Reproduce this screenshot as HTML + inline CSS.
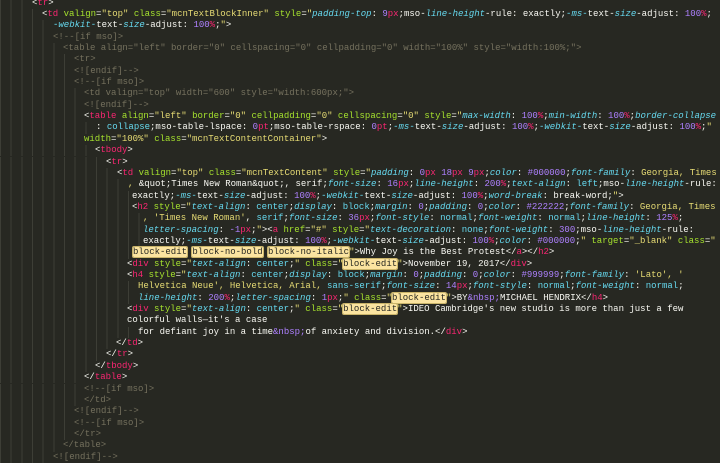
<!DOCTYPE html>
<html><head><meta charset="utf-8"><style>
html,body{margin:0;padding:0;}
body{width:720px;height:460px;overflow:hidden;background:#272822;position:relative;font-family:"Liberation Mono",monospace;font-size:9px;color:#f8f8f2;}
.l{position:absolute;left:0;height:11.35px;line-height:11.35px;white-space:pre;}
.g{position:absolute;left:0;height:11.35px;background:repeating-linear-gradient(90deg,#3d3e36 0,#3d3e36 1px,transparent 1px,transparent 10.67px);}
.t{color:#f92672}.a{color:#a6e22e}.s{color:#e6db74}.p{color:#66d9ef;font-style:italic}.v{color:#66d9ef}.n{color:#ae81ff}.u{color:#f92672}.c{color:#75715e}
.h{background:#fbe4a0;color:#272822;box-shadow:0 0 0 1px #c9b46a;border-radius:1px}
</style></head><body>
<div id="root"></div>
<script>
(function(){
var L=[
[32,'&lt;<span class="t">tr</span>&gt;'],
[42,'&lt;<span class="t">td</span> <span class="a">valign</span>=<span class="s">"top"</span> <span class="a">class</span>=<span class="s">"mcnTextBlockInner"</span> <span class="a">style</span>=<span class="s">"</span><span class="p">padding-top</span>: <span class="n">9</span><span class="u">px</span>;mso-<span class="p">line-height</span>-rule: exactly;<span class="p">-ms-</span>text-<span class="p">size</span>-adjust: <span class="n">100</span><span class="u">%</span>;'],
[53,'<span class="p">-webkit-</span>text-<span class="p">size</span>-adjust: <span class="n">100</span><span class="u">%</span>;<span class="s">"</span>&gt;'],
[53,'<span class="c">&lt;!--[if mso]&gt;</span>'],
[63,'<span class="c">&lt;table align="left" border="0" cellspacing="0" cellpadding="0" width="100%" style="width:100%;"&gt;</span>'],
[74,'<span class="c">&lt;tr&gt;</span>'],
[74,'<span class="c">&lt;![endif]--&gt;</span>'],
[74,'<span class="c">&lt;!--[if mso]&gt;</span>'],
[84,'<span class="c">&lt;td valign="top" width="600" style="width:600px;"&gt;</span>'],
[84,'<span class="c">&lt;![endif]--&gt;</span>'],
[84,'&lt;<span class="t">table</span> <span class="a">align</span>=<span class="s">"left"</span> <span class="a">border</span>=<span class="s">"0"</span> <span class="a">cellpadding</span>=<span class="s">"0"</span> <span class="a">cellspacing</span>=<span class="s">"0"</span> <span class="a">style</span>=<span class="s">"</span><span class="p">max-width</span>: <span class="n">100</span><span class="u">%</span>;<span class="p">min-width</span>: <span class="n">100</span><span class="u">%</span>;<span class="p">border-collapse</span>'],
[96,': <span class="v">collapse</span>;mso-table-lspace: <span class="n">0</span><span class="u">pt</span>;mso-table-rspace: <span class="n">0</span><span class="u">pt</span>;<span class="p">-ms-</span>text-<span class="p">size</span>-adjust: <span class="n">100</span><span class="u">%</span>;<span class="p">-webkit-</span>text-<span class="p">size</span>-adjust: <span class="n">100</span><span class="u">%</span>;<span class="s">"</span>'],
[84,'<span class="a">width</span>=<span class="s">"100%"</span> <span class="a">class</span>=<span class="s">"mcnTextContentContainer"</span>&gt;'],
[95,'&lt;<span class="t">tbody</span>&gt;'],
[106,'&lt;<span class="t">tr</span>&gt;'],
[117,'&lt;<span class="t">td</span> <span class="a">valign</span>=<span class="s">"top"</span> <span class="a">class</span>=<span class="s">"mcnTextContent"</span> <span class="a">style</span>=<span class="s">"</span><span class="p">padding</span>: <span class="n">0</span><span class="u">px</span> <span class="n">18</span><span class="u">px</span> <span class="n">9</span><span class="u">px</span>;<span class="p">color</span>: <span class="n">#000000</span>;<span class="p">font-family</span>: <span class="s">Georgia, Times</span>'],
[128,'<span class="s">, </span>&amp;quot;Times New Roman&amp;quot;, serif;<span class="p">font-size</span>: <span class="n">16</span><span class="u">px</span>;<span class="p">line-height</span>: <span class="n">200</span><span class="u">%</span>;<span class="p">text-align</span>: <span class="v">left</span>;mso-<span class="p">line-height</span>-rule:'],
[132,'exactly;<span class="p">-ms-</span>text-<span class="p">size</span>-adjust: <span class="n">100</span><span class="u">%</span>;<span class="p">-webkit-</span>text-<span class="p">size</span>-adjust: <span class="n">100</span><span class="u">%</span>;<span class="p">word-break</span>: break-word;<span class="s">"</span>&gt;'],
[132,'&lt;<span class="t">h2</span> <span class="a">style</span>=<span class="s">"</span><span class="p">text-align</span>: <span class="v">center</span>;<span class="p">display</span>: <span class="v">block</span>;<span class="p">margin</span>: <span class="n">0</span>;<span class="p">padding</span>: <span class="n">0</span>;<span class="p">color</span>: <span class="n">#222222</span>;<span class="p">font-family</span>: <span class="s">Georgia, Times</span>'],
[143,'<span class="s">, \'Times New Roman\'</span>, <span class="v">serif</span>;<span class="p">font-size</span>: <span class="n">36</span><span class="u">px</span>;<span class="p">font-style</span>: <span class="v">normal</span>;<span class="p">font-weight</span>: <span class="v">normal</span>;<span class="p">line-height</span>: <span class="n">125</span><span class="u">%</span>;'],
[143,'<span class="p">letter-spacing</span>: <span class="n">-1</span><span class="u">px</span>;<span class="s">"</span>&gt;&lt;<span class="t">a</span> <span class="a">href</span>=<span class="s">"#"</span> <span class="a">style</span>=<span class="s">"</span><span class="p">text-decoration</span>: <span class="v">none</span>;<span class="p">font-weight</span>: <span class="n">300</span>;mso-<span class="p">line-height</span>-rule:'],
[143,'exactly;<span class="p">-ms-</span>text-<span class="p">size</span>-adjust: <span class="n">100</span><span class="u">%</span>;<span class="p">-webkit-</span>text-<span class="p">size</span>-adjust: <span class="n">100</span><span class="u">%</span>;<span class="p">color</span>: <span class="n">#000000</span>;<span class="s">"</span> <span class="a">target</span>=<span class="s">"_blank"</span> <span class="a">class</span>=<span class="s">"</span>'],
[133,'<span class="h">block-edit</span> <span class="h">block-no-bold</span> <span class="h">block-no-italic</span><span class="s">"</span>&gt;Why Joy is the Best Protest&lt;/<span class="t">a</span>&gt;&lt;/<span class="t">h2</span>&gt;'],
[127,'&lt;<span class="t">div</span> <span class="a">style</span>=<span class="s">"</span><span class="p">text-align</span>: <span class="v">center</span>;<span class="s">"</span> <span class="a">class</span>=<span class="s">"</span><span class="h">block-edit</span><span class="s">"</span>&gt;November 19, 2017&lt;/<span class="t">div</span>&gt;'],
[127,'&lt;<span class="t">h4</span> <span class="a">style</span>=<span class="s">"</span><span class="p">text-align</span>: <span class="v">center</span>;<span class="p">display</span>: <span class="v">block</span>;<span class="p">margin</span>: <span class="n">0</span>;<span class="p">padding</span>: <span class="n">0</span>;<span class="p">color</span>: <span class="n">#999999</span>;<span class="p">font-family</span>: <span class="s">\'Lato\', \'</span>'],
[138,'<span class="s">Helvetica Neue\', Helvetica, Arial, </span><span class="v">sans-serif</span>;<span class="p">font-size</span>: <span class="n">14</span><span class="u">px</span>;<span class="p">font-style</span>: <span class="v">normal</span>;<span class="p">font-weight</span>: <span class="v">normal</span>;'],
[138,'<span class="p">line-height</span>: <span class="n">200</span><span class="u">%</span>;<span class="p">letter-spacing</span>: <span class="n">1</span><span class="u">px</span>;<span class="s">"</span> <span class="a">class</span>=<span class="s">"</span><span class="h">block-edit</span><span class="s">"</span>&gt;BY<span class="n">&amp;nbsp;</span>MICHAEL HENDRIX&lt;/<span class="t">h4</span>&gt;'],
[127,'&lt;<span class="t">div</span> <span class="a">style</span>=<span class="s">"</span><span class="p">text-align</span>: <span class="v">center</span>;<span class="s">"</span> <span class="a">class</span>=<span class="s">"</span><span class="h">block-edit</span><span class="s">"</span>&gt;IDEO Cambridge\'s new studio is more than just a few'],
[127,'colorful walls—it\'s a case'],
[138,'for defiant joy in a time<span class="n">&amp;nbsp;</span>of anxiety and division.&lt;/<span class="t">div</span>&gt;'],
[116,'&lt;/<span class="t">td</span>&gt;'],
[106,'&lt;/<span class="t">tr</span>&gt;'],
[95,'&lt;/<span class="t">tbody</span>&gt;'],
[84,'&lt;/<span class="t">table</span>&gt;'],
[84,'<span class="c">&lt;!--[if mso]&gt;</span>'],
[84,'<span class="c">&lt;/td&gt;</span>'],
[74,'<span class="c">&lt;![endif]--&gt;</span>'],
[74,'<span class="c">&lt;!--[if mso]&gt;</span>'],
[74,'<span class="c">&lt;/tr&gt;</span>'],
[63,'<span class="c">&lt;/table&gt;</span>'],
[53,'<span class="c">&lt;![endif]--&gt;</span>']
];
var out='';
for(var i=0;i<L.length;i++){
 var yy=(-2.4+i*11.35).toFixed(2);
 var gx=L[i][0]-3;
 out+='<div class="g" style="top:'+yy+'px;width:'+gx+'px"></div>';
 out+='<div class="l" style="top:'+yy+'px;left:'+L[i][0]+'px">'+L[i][1]+'</div>';
}
document.getElementById('root').innerHTML=out;
})();
</script>
</body></html>
